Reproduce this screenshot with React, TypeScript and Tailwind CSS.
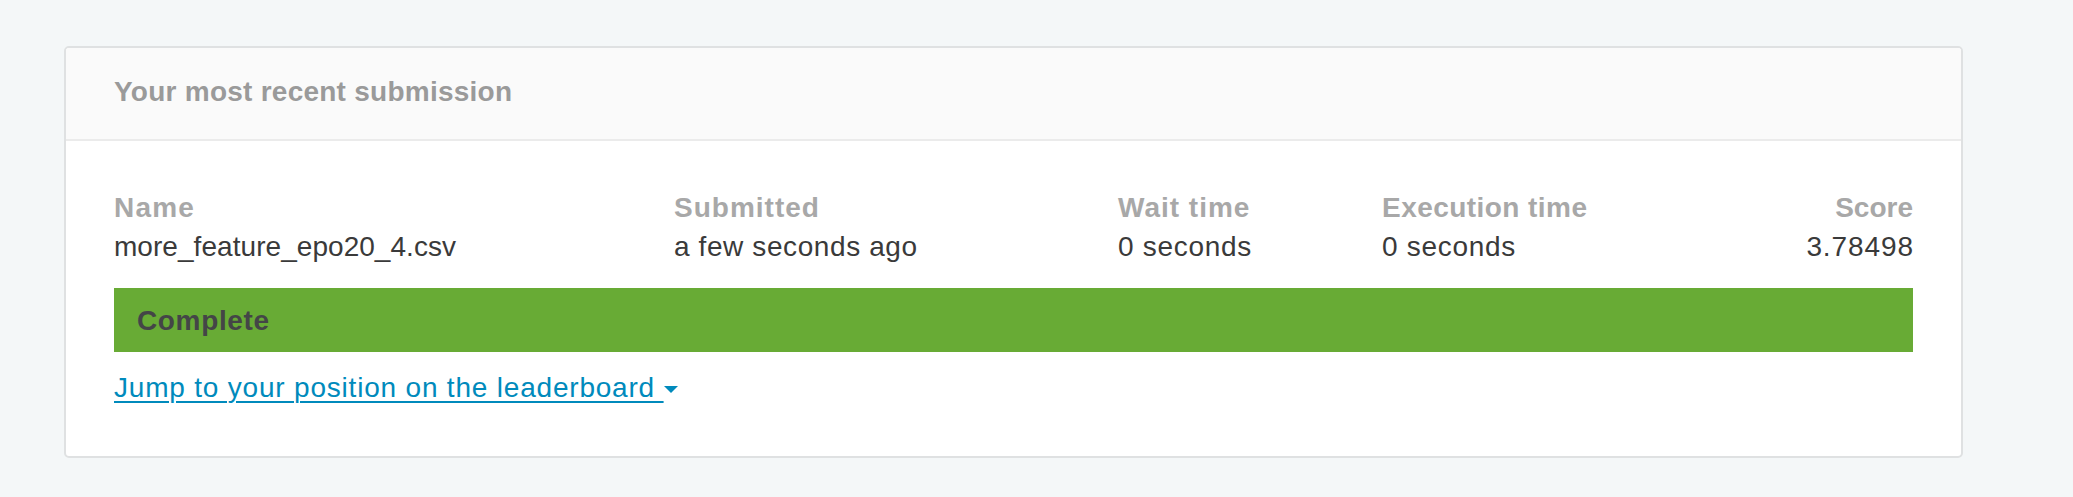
import React from "react";

export default function App() {
  const font = { fontFamily: '"Liberation Sans", Arial, sans-serif' };
  return (
    <div className="min-h-[497px] w-[2073px] bg-[#f4f7f8] pt-[46px]" style={font}>
      <div className="ml-[64px] w-[1899px] rounded-[5px] border-2 border-[#dfe1e2] bg-white overflow-hidden">
        <div className="border-b-2 border-[#ebebeb] bg-[#fafafa] px-[48px] pt-[23px] pb-[26px]">
          <h2 className="text-[28px] font-bold leading-[42px] tracking-[0.25px] text-[#9a9a9a]">Your most recent submission</h2>
        </div>
        <div className="px-[48px] pt-[47px] pb-[49px]">
          <div className="grid grid-cols-[560px_444px_264px_1fr_auto] text-[28px] leading-[39px]">
            <div className="font-bold tracking-[1.2px] text-[#a8a8a8]">Name</div>
            <div className="font-bold tracking-[1px] text-[#a8a8a8]">Submitted</div>
            <div className="font-bold tracking-[1px] text-[#a8a8a8]">Wait time</div>
            <div className="font-bold tracking-[0.45px] text-[#a8a8a8]">Execution time</div>
            <div className="font-bold text-[#a8a8a8] text-right">Score</div>
            <div className="tracking-[0.05px] text-[#3a3a3a]">more_feature_epo20_4.csv</div>
            <div className="tracking-[0.6px] text-[#3a3a3a]">a few seconds ago</div>
            <div className="tracking-[0.7px] text-[#3a3a3a]">0 seconds</div>
            <div className="tracking-[0.7px] text-[#3a3a3a]">0 seconds</div>
            <div className="text-right">
              <span className="tracking-[0.9px] text-[#3a3a3a] mr-[-0.9px]">3.78498</span>
            </div>
          </div>
          <div className="mt-[22px] flex h-[64px] items-center bg-[#68ab35] px-[23px]">
            <span className="text-[28px] font-bold leading-[39px] tracking-[0.65px] text-[#444547]">Complete</span>
          </div>
          <div className="mt-[16px] text-[28px] leading-[39px]">
            <a href="#" className="text-[#008abc] tracking-[0.8px] underline decoration-2 underline-offset-[4px]">
              Jump to your position on the leaderboard{" "}
              <span className="inline-block align-middle">
                <svg width="14" height="8" viewBox="0 0 14 8" className="block">
                  <path d="M0 0 L14 0 L7 7 Z" fill="#008abc" />
                </svg>
              </span>
            </a>
          </div>
        </div>
      </div>
    </div>
  );
}
